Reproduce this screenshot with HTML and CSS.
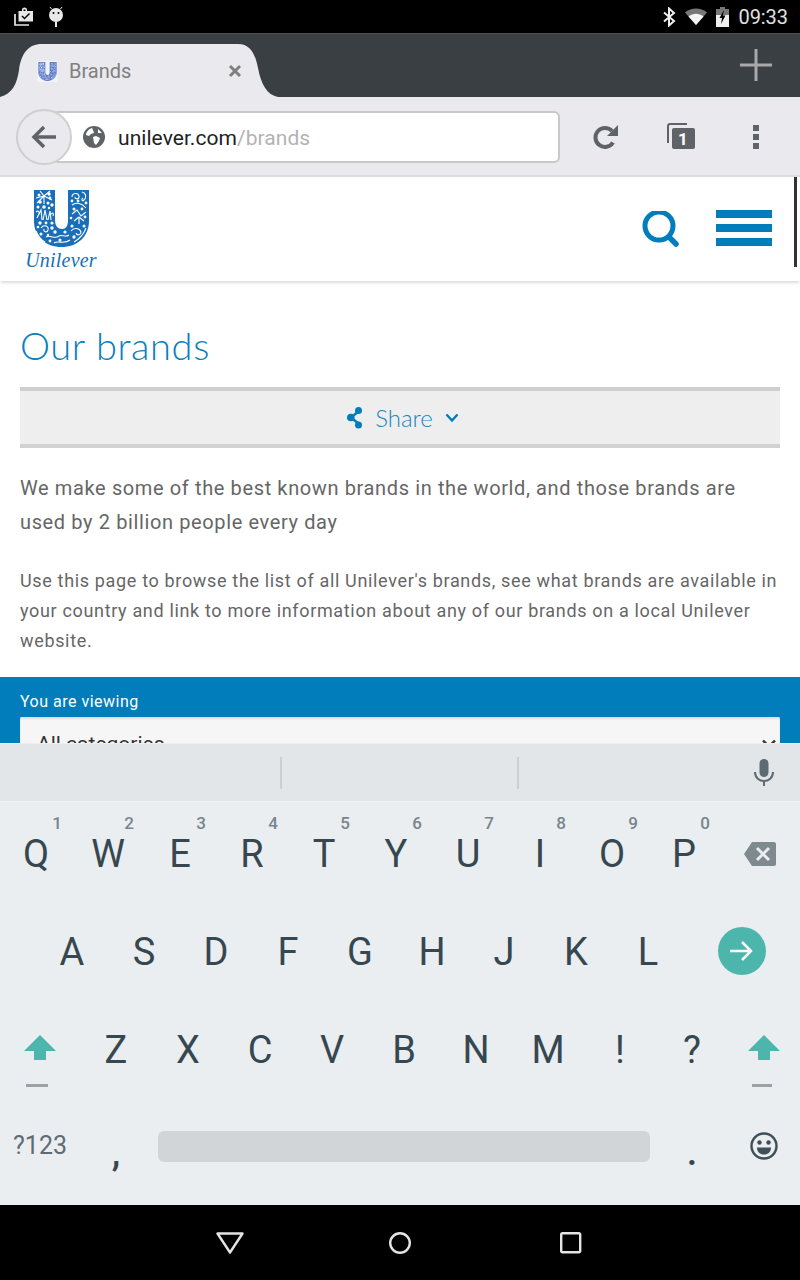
FILE: index.html
```html
<!DOCTYPE html>
<html lang="en">
<head>
<meta charset="utf-8">
<title>Brands</title>
<link rel="stylesheet" href="styles.css">
</head>
<body>
<div class="device">
  <svg width="0" height="0" class="defs">
    <defs>
      <g id="u-mark">
        <path class="u-body" d="M0 0H21V30C21 36 24 39 28 39C32 39 34 36 34 30V0H55V31C55 47 43 57 27.500 57C12 57 0 47 0 31Z"/>
        <g class="u-lines">
          <path d="M2 8L10 6L6 1M10 6L16 1M10 6L18 10M10 6L10 14M10 6L3 13"/>
          <path d="M3 28L7 20L8 30M9 30L11 20L13 30M14 30L16 21L17 30"/>
          <path d="M7 38C10 34 15 36 14 40C13 43 9 42 10 39"/>
          <path d="M12 47C16 44 20 50 25 46C28 44 31 48 35 45"/>
          <path d="M20 53C24 50 30 55 36 50"/>
          <path d="M38 7C38 3 44 2 45 6C46 9 41 10 41 7"/>
          <path d="M48 2C52 3 53 7 50 10C48 12 47 9 49 8"/>
          <path d="M38 15C42 12 48 13 52 18"/>
          <path d="M38 24L43 20L47 26L52 22"/>
          <path d="M40 31L45 27M45 27L50 31M45 27V34"/>
          <path d="M37 41C40 37 46 38 47 42C47 45 43 46 42 43"/>
          <path d="M2 22C4 20 6 22 5 24M17 24C19 22 20 24 19 26"/>
          <path d="M2 41C4 46 7 50 11 52M40 52C45 49 50 44 52 38"/>
        </g>
        <g class="u-holes">
          <circle cx="5" cy="5" r="1.500"/><circle cx="15" cy="4" r="1.700"/><circle cx="16" cy="8" r="1.400"/><circle cx="6" cy="12" r="1.800"/><circle cx="14" cy="13" r="1.500"/><circle cx="18" cy="15" r="1.700"/><circle cx="4" cy="17" r="1.500"/><circle cx="10" cy="17" r="1.800"/><circle cx="15" cy="18" r="1.200"/><circle cx="6" cy="33" r="1.700"/><circle cx="12" cy="33" r="1.400"/><circle cx="18" cy="33" r="1.600"/><circle cx="4" cy="37" r="1.300"/><circle cx="18" cy="38" r="1.700"/><circle cx="7" cy="44" r="1.500"/><circle cx="14" cy="45" r="1.200"/><circle cx="21" cy="42" r="1.700"/><circle cx="16" cy="51" r="1.400"/><circle cx="26" cy="50" r="1.500"/><circle cx="31" cy="42" r="1.600"/><circle cx="40" cy="47" r="1.700"/><circle cx="50" cy="36" r="1.500"/><circle cx="38" cy="36" r="1.500"/><circle cx="51" cy="27" r="1.400"/><circle cx="40" cy="19" r="1.500"/><circle cx="48" cy="19" r="1.400"/><circle cx="44" cy="11" r="1.400"/><circle cx="52" cy="13" r="1.400"/><circle cx="38" cy="11" r="1.400"/><circle cx="37" cy="28" r="1.300"/>
        </g>
      </g>
    </defs>
  </svg>

  <div class="status-bar">
    <div class="status-left">
      <svg class="ic" width="20" height="20" viewBox="0 0 20 20"><path fill="#e8e8e8" d="M4.500 4H8V2.500C8 1.500 9 .5 10.500 .5S13 1.500 13 2.500V4H19V14.500H4.500ZM9.500 4H11.500V2.500H9.500Z"/><path fill="none" stroke="#000" stroke-width="1.500" d="M8 9L10.500 11.500L15.500 6.500"/><path fill="none" stroke="#e8e8e8" stroke-width="1.700" d="M1 7V18H15"/></svg>
      <svg class="ic" width="14" height="20" viewBox="0 0 14 20"><path fill="#e8e8e8" d="M0 8A7 7 0 0 1 14 8A7 7 0 0 1 0 8Z"/><path fill="#e8e8e8" d="M6 15H8V20H6Z"/><circle cx="4.500" cy="6" r="1"/><circle cx="9.500" cy="6" r="1"/><path stroke="#e8e8e8" d="M2.500 2L1 0M11.500 2L13 0"/></svg>
    </div>
    <div class="status-right">
      <svg class="ic" width="13" height="20" viewBox="0 0 13 20"><path fill="none" stroke="#eee" stroke-width="2" d="M1 5.500L11 14L6 18.500V1.500L11 6L1 14.500"/></svg>
      <svg class="ic" width="22" height="17" viewBox="0 0 22 17"><path fill="#777" d="M0 4.500C6 -1 16 -1 22 4.500L11 17Z"/><path fill="#f4f4f4" d="M3.500 8.500C8 4.800 14 4.800 18.500 8.500L11 17Z"/></svg>
      <svg class="ic" width="13" height="20" viewBox="0 0 13 20"><path fill="#777" d="M4 0H9V2H13V8H0V2H4Z"/><path fill="#eee" d="M0 8H13V20H0Z"/><path fill="#000" d="M8 3L3.500 11H6L5 17L9.500 8.500H7Z"/></svg>
      <span class="clock">09:33</span>
    </div>
  </div>

  <div class="tab-strip">
    <div class="tab">
      <svg class="tab-shape" width="278" height="53" viewBox="0 0 278 53"><path fill="#e9e9ee" d="M0 53C12 50 17 40 19 26C21 10 28 0 42 0H238C250 0 255 9 258 24C261 40 267 51 278 53Z"/></svg>
      <svg class="favicon" width="21" height="21" viewBox="-3 -3 61 63"><rect x="-3" y="-3" width="61" height="63" fill="#f2f4fb"/><use href="#u-mark" class="fav-mark"/></svg>
      <span class="tab-title">Brands</span>
      <svg class="tab-close" width="14" height="14" viewBox="0 0 14 14"><path stroke="#808080" stroke-width="3" d="M2 2L12 12M12 2L2 12"/></svg>
    </div>
    <svg class="plus" width="34" height="34" viewBox="0 0 34 34"><path stroke="#a8a9aa" stroke-width="3" d="M1 17H33M17 1V33"/></svg>
  </div>

  <div class="toolbar">
    <div class="omnibox">
      <div class="back">
        <svg width="26" height="24" viewBox="0 0 26 24"><path fill="none" stroke="#5f6368" stroke-width="3.500" d="M25 12H3M13 2L3 12L13 22"/></svg>
      </div>
      <div class="url-field">
        <svg width="22" height="22" viewBox="0 0 22 22"><circle cx="11" cy="11" r="11" fill="#5f6368"/><path fill="#fff" d="M9 2C6 3 3 6 3 9L6 10L8 8L11 7L10 4ZM10 11L13 10L17 12L16 15L13 19L11 17ZM15 3L19 7L15 7Z"/></svg>
        <span class="url"><span class="host">unilever.com</span><span class="path">/brands</span></span>
      </div>
    </div>
    <div class="tool-actions">
      <svg class="tool-reload" width="26" height="26" viewBox="0 0 26 26"><path fill="none" stroke="#5f6368" stroke-width="4" d="M20 18.500A9.500 9.500 0 1 1 19 7"/><path fill="#5f6368" d="M25 1V12H14Z"/></svg>
      <svg class="tool-tabs" width="30" height="28" viewBox="0 0 30 28"><path fill="none" stroke="#5f6368" stroke-width="2" d="M2 20V3C2 2 3 1 4 1H21"/><rect x="6" y="5" width="23" height="21" rx="2" fill="#5f6368"/></svg>
      <span class="tab-count">1</span>
      <div class="tool-menu"><i></i><i></i><i></i></div>
    </div>
  </div>
  <div class="toolbar-line"></div>

  <div class="page">
    <div class="scrollbar"></div>
    <header class="site-header">
      <div class="logo">
        <svg width="55" height="57" viewBox="0 0 55 57"><use href="#u-mark" class="logo-mark"/></svg>
        <span class="logo-word">Unilever</span>
      </div>
      <div class="header-actions">
        <svg width="38" height="38" viewBox="0 0 38 38"><circle cx="17" cy="15" r="14" fill="none" stroke="#027dbb" stroke-width="5"/><path stroke="#027dbb" stroke-width="5.500" stroke-linecap="round" d="M27 26L34 33"/></svg>
        <div class="burger"><i></i><i></i><i></i></div>
      </div>
    </header>
    <main class="content">
      <h1 class="title">Our brands</h1>
      <div class="share">
        <svg width="16" height="22" viewBox="0 0 16 22"><path fill="none" stroke="#027dbb" stroke-width="2.500" d="M12 4L4 10.500L12 17"/><circle cx="11.500" cy="3.500" r="3.500" fill="#027dbb"/><circle cx="3.800" cy="10.500" r="3.800" fill="#027dbb"/><circle cx="11.500" cy="18" r="3.500" fill="#027dbb"/></svg>
        <span class="share-label">Share</span>
        <svg width="14" height="10" viewBox="0 0 14 10"><path fill="none" stroke="#027dbb" stroke-width="2.400" d="M1.500 1.500L7 7.500L12.500 1.500"/></svg>
      </div>
      <p class="lead">We make some of the best known brands in the world, and those brands are used by 2 billion people every day</p>
      <p class="body-text">Use this page to browse the list of all Unilever's brands, see what brands are available in your country and link to more information about any of our brands on a local Unilever website.</p>
    </main>
    <section class="filter">
      <div class="filter-label">You are viewing</div>
      <div class="select">
        <span>All categories</span>
        <svg width="14" height="10" viewBox="0 0 14 10"><path fill="none" stroke="#333" stroke-width="2.400" d="M1 1.500L7 7.500L13 1.500"/></svg>
      </div>
    </section>
  </div>

  <div class="keyboard">
    <div class="suggest">
      <div class="slot"></div>
      <div class="slot slot-mid"></div>
      <div class="slot slot-mic">
        <svg width="22" height="28" viewBox="0 0 22 28"><rect x="6.500" y="0" width="9" height="18" rx="4.500" fill="#5e6a72"/><path fill="none" stroke="#5e6a72" stroke-width="2" d="M2 13C2 25 20 25 20 13M11 21V27"/></svg>
      </div>
    </div>
    <div class="row">
      <div class="key">Q<sup>1</sup></div><div class="key">W<sup>2</sup></div><div class="key">E<sup>3</sup></div><div class="key">R<sup>4</sup></div><div class="key">T<sup>5</sup></div><div class="key">Y<sup>6</sup></div><div class="key">U<sup>7</sup></div><div class="key">I<sup>8</sup></div><div class="key">O<sup>9</sup></div><div class="key">P<sup>0</sup></div>
      <div class="key key-80"><svg width="32" height="24" viewBox="0 0 32 24"><path fill="#7f8a8e" d="M8 0H30C31 0 32 1 32 2V22C32 23 31 24 30 24H8L0 12Z"/><path stroke="#eaedf0" stroke-width="3" d="M13 6L25 18M25 6L13 18"/></svg></div>
    </div>
    <div class="row row-home">
      <div class="key">A</div><div class="key">S</div><div class="key">D</div><div class="key">F</div><div class="key">G</div><div class="key">H</div><div class="key">J</div><div class="key">K</div><div class="key">L</div>
      <div class="key key-go"><div class="go"><svg width="24" height="22" viewBox="0 0 24 22"><path fill="none" stroke="#fff" stroke-width="2.500" d="M0 11H21M12 2L21 11L12 20"/></svg></div></div>
    </div>
    <div class="row">
      <div class="key key-80"><div class="shift"><svg width="32" height="25" viewBox="0 0 32 25"><path fill="#4db6ac" d="M16 0L32 16H22V25H10V16H0Z"/></svg><i class="shift-line"></i></div></div>
      <div class="key">Z</div><div class="key">X</div><div class="key">C</div><div class="key">V</div><div class="key">B</div><div class="key">N</div><div class="key">M</div><div class="key">!</div><div class="key">?</div>
      <div class="key"><div class="shift"><svg width="32" height="25" viewBox="0 0 32 25"><path fill="#4db6ac" d="M16 0L32 16H22V25H10V16H0Z"/></svg><i class="shift-line shift-line-right"></i></div></div>
    </div>
    <div class="row row-bottom">
      <div class="key key-80 key-sym">?123</div>
      <div class="key key-comma">,</div>
      <div class="key key-space"><div class="space-bar"></div></div>
      <div class="key key-comma">.</div>
      <div class="key"><svg width="28" height="28" viewBox="0 0 28 28"><circle cx="14" cy="14" r="12.500" fill="none" stroke="#3f4f58" stroke-width="2.400"/><circle cx="9.500" cy="10.500" r="2.200" fill="#3f4f58"/><circle cx="18.500" cy="10.500" r="2.200" fill="#3f4f58"/><path fill="#3f4f58" d="M7 15.500H21C21 20 18 22.500 14 22.500S7 20 7 15.500Z"/></svg></div>
    </div>
  </div>

  <nav class="nav-bar">
    <svg width="28" height="22" viewBox="0 0 28 22"><path fill="none" stroke="#e4e4e4" stroke-width="2.400" stroke-linejoin="round" d="M1.500 1.500H26.500L14 20.500Z"/></svg>
    <svg class="nav-home" width="22" height="22" viewBox="0 0 22 22"><circle cx="11" cy="11" r="9.800" fill="none" stroke="#e4e4e4" stroke-width="2.400"/></svg>
    <svg class="nav-recent" width="22" height="22" viewBox="0 0 22 22"><rect x="1.200" y="1.200" width="19" height="19" rx="1.500" fill="none" stroke="#e4e4e4" stroke-width="2.400"/></svg>
  </nav>
</div>
</body>
</html>
```

FILE: styles.css
```css
* { box-sizing: border-box; }
html, body { margin: 0; padding: 0; }
body { font-family: Roboto, "Liberation Sans", sans-serif; background: #000; }
.defs { display: block; height: 0; width: 0; }
.device { width: 800px; height: 1280px; display: flex; flex-direction: column; overflow: hidden; }
.ic { display: block; flex: none; }

/* status bar */
.status-bar { height: 33px; background: #000; display: flex; justify-content: space-between; align-items: center; padding: 0 12px 0 14px; flex: none; }
.status-left { display: flex; align-items: center; gap: 15px; }
.status-right { display: flex; align-items: center; gap: 9px; }
.clock { color: #e0e0e0; font-size: 20px; line-height: 24px; letter-spacing: -.05px; }

/* tab strip */
.tab-strip { height: 64px; background: #3a3f43; border-top: 1px solid #4a4e52; display: flex; justify-content: space-between; align-items: flex-start; padding: 10px 27px 0 0; flex: none; }
.tab { position: relative; width: 278px; height: 53px; display: flex; align-items: center; padding: 0 0 0 37px; }
.tab-shape { position: absolute; left: 0; top: 0; }
.favicon { position: relative; display: block; flex: none; margin-top: 1px; }
.fav-mark { fill: #5b79c9; stroke: none; }
.tab-title { position: relative; margin-left: 11px; font-size: 20px; color: #808080; width: 159px; margin-top: 1px; }
.tab-close { position: relative; display: block; flex: none; margin-top: 1px; }
.plus { display: block; margin-top: 4px; }

/* toolbar */
.toolbar { height: 78px; background: #e9e9ee; display: flex; align-items: center; justify-content: space-between; padding: 2px 0 0 16px; flex: none; }
.toolbar-line { height: 2px; background: #dcdce0; flex: none; }
.omnibox { position: relative; display: flex; align-items: center; }
.back { position: relative; z-index: 1; width: 56px; height: 56px; border-radius: 50%; background: #e9e9ee; border: 2px solid #cfcfd0; display: flex; align-items: center; justify-content: center; }
.url-field { width: 508px; height: 52px; margin-left: -20px; background: #fff; border: 2px solid #c8c8c8; border-radius: 6px; display: flex; align-items: center; padding-left: 29px; gap: 13px; }
.url-field svg { display: block; flex: none; }
.url { font-size: 21px; line-height: 30px; padding-top: 2px; letter-spacing: .05px; }
.host { color: #222; }
.path { color: #b3b3b3; }
.tool-actions { position: relative; display: flex; align-items: center; width: 240px; height: 40px; }
.tool-reload { display: block; margin-left: 33px; }
.tool-tabs { display: block; margin-left: 47px; }
.tab-count { position: absolute; left: 116px; top: 10px; color: #fff; font-size: 17px; font-weight: 700; width: 14px; text-align: center; line-height: 24px; }
.tool-menu { margin-left: 57px; display: flex; flex-direction: column; gap: 3px; }
.tool-menu i { display: block; width: 6px; height: 6px; background: #5f6368; }

/* page */
.page { position: relative; height: 566px; flex: none; background: #fff; overflow: hidden; display: flex; flex-direction: column; }
.scrollbar { position: absolute; right: 3px; top: 0; width: 3px; height: 90px; background: #333; z-index: 2; }
.site-header { height: 104px; flex: none; display: flex; justify-content: space-between; align-items: flex-start; padding: 13px 28px 0 26px; box-shadow: 0 3px 3px -1px #dcdcdc; }
.logo { display: flex; flex-direction: column; align-items: center; width: 70px; }
.logo svg { display: block; }
.logo-mark { fill: #1a6eb8; }
.u-lines { fill: none; stroke: #fff; stroke-width: 1.1; }
.u-holes { fill: #fff; }
.fav-mark .u-lines { stroke-width: 1.4; }
.logo-word { font-family: "Liberation Serif", serif; font-style: italic; font-weight: 400; font-size: 20px; line-height: 20px; color: #1a6eb8; margin-top: 3px; letter-spacing: .2px; }
.header-actions { display: flex; align-items: flex-start; gap: 36px; padding-top: 20px; }
.header-actions svg { display: block; margin-top: 1px; }
.burger { display: flex; flex-direction: column; gap: 6px; width: 56px; margin-top: 0; }
.burger i { display: block; height: 8px; background: #027dbb; }
.content { flex: 1; padding: 0 20px; overflow: hidden; }
.title { margin: 40px 0 0 0; font-family: Lato, Roboto, sans-serif; font-weight: 300; font-size: 38px; line-height: 48px; color: #0b80bb; letter-spacing: .6px; }
.share { margin-top: 18px; height: 61px; background: #eee; border-top: 4px solid #cfcfcf; border-bottom: 4px solid #d2d2d2; display: flex; align-items: center; justify-content: center; gap: 12px; padding-left: 6px; }
.share svg { display: block; }
.share-label { font-family: Lato, Roboto, sans-serif; font-weight: 300; font-size: 24px; color: #1a86c0; }
.lead { margin: 23px 0 0; font-size: 20px; line-height: 34px; color: #666; letter-spacing: .62px; }
.body-text { margin: 27px 0 0; font-size: 18px; line-height: 30px; color: #666; letter-spacing: .66px; }
.filter { height: 66px; flex: none; background: #027dbb; padding: 15px 20px 0; overflow: hidden; }
.filter-label { color: #fff; font-size: 16px; line-height: 19px; letter-spacing: .5px; }
.select { margin-top: 6px; height: 54px; background: #f6f6f6; display: flex; justify-content: space-between; align-items: center; padding: 0 4px 0 17px; color: #333; font-size: 21px; border-radius: 2px 2px 0 0; box-shadow: inset 0 2px 2px #ddd; }

/* keyboard */
.keyboard { height: 462px; flex: none; background: #eaeef1; display: flex; flex-direction: column; color: #37474f; }
.suggest { height: 59px; flex: none; background: #e3e6e9; border-top: 1px solid #eceef0; border-bottom: 1px solid #f0f2f4; display: flex; align-items: center; }
.slot { height: 32px; width: 280px; flex: none; }
.slot-mid { border-left: 2px solid #cdd0d3; border-right: 2px solid #cdd0d3; width: 239px; }
.slot-mic { flex: 1; display: flex; justify-content: flex-end; align-items: center; padding-right: 25px; height: 32px; }
.slot-mic svg { display: block; }
.row { height: 98px; flex: none; display: flex; }
.row-home { padding-left: 36px; }
.row-bottom { height: 108px; }
.key { position: relative; width: 72px; flex: none; display: flex; align-items: center; justify-content: center; font-size: 38px; line-height: 44px; padding-top: 6px; }
.key svg { display: block; }
.key sup { position: absolute; left: 50%; top: 11px; width: 16px; margin-left: 13px; text-align: center; font-size: 17px; line-height: 20px; font-weight: 500; color: #78858c; vertical-align: baseline; }
.key-80 { width: 80px; }
.key-go { width: 116px; padding-top: 4px; }
.go { width: 48px; height: 48px; border-radius: 50%; background: #4db6ac; display: flex; align-items: center; justify-content: center; }
.shift { display: flex; flex-direction: column; align-items: center; gap: 24px; padding-top: 21px; }
.shift-line { display: block; width: 22px; height: 3px; background: #9ba2a7; margin-right: 6px; }
.shift-line-right { width: 20px; margin-right: 4px; }
.row-bottom .key { padding: 0 0 8px; }
.key-sym { font-size: 25px; color: #5f6b73; }
.key-comma { font-size: 38px; padding-top: 12px !important; font-weight: 500; }
.key-space { width: 504px; }
.space-bar { width: 492px; height: 31px; border-radius: 6px; background: #d1d5d8; }

/* nav */
.nav-bar { height: 75px; flex: none; background: #000; display: flex; align-items: center; padding: 0 0 0 216px; }
.nav-bar svg { display: block; }
.nav-home { margin-left: 145px; }
.nav-recent { margin-left: 149px; }
```
